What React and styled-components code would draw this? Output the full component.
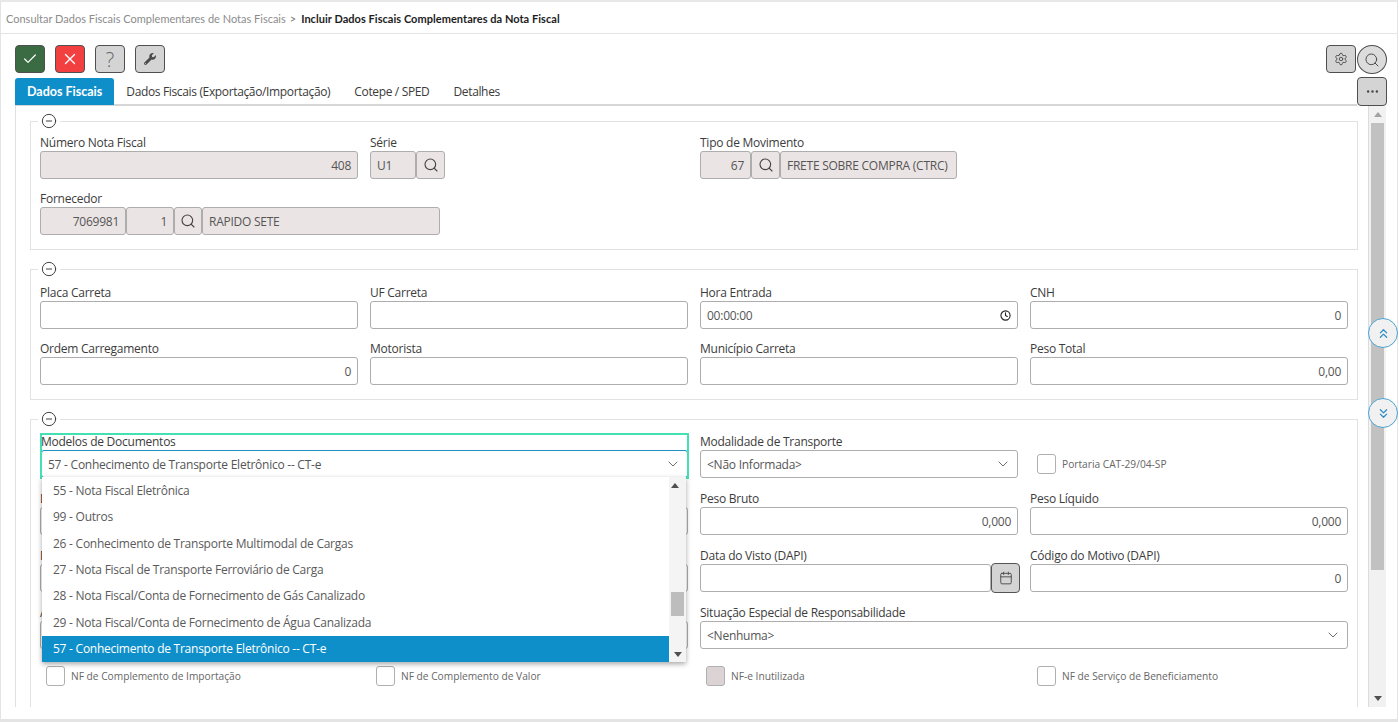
import styled, { createGlobalStyle } from 'styled-components';
import { Check, X, Search, Settings, Ellipsis, Clock, Calendar, ChevronDown, ChevronsUp, ChevronsDown, CircleMinus } from 'lucide-react';
import { FaWrench } from 'react-icons/fa';

const GlobalStyle = createGlobalStyle`
  html, body {
    margin: 0;
    padding: 0;
    background: #fff;
    overflow: hidden;
  }
  * {
    box-sizing: border-box;
  }
`;

const Frame = styled.div`
  height: 722px;
  border-top: 2px solid #e8e8e8;
  border-bottom: 3px solid #e4e4e4;
  border-left: 1px solid #e4e4e4;
  border-right: 1px solid #e4e4e4;
  margin-right: 1px;
  font-family: "Open Sans", sans-serif;
  font-size: 12px;
  letter-spacing: -0.25px;
  color: #444;
  display: flex;
  flex-direction: column;
`;

const Breadcrumb = styled.div`
  height: 32px;
  flex: none;
  padding: 1px 0 0 5px;
  display: flex;
  align-items: center;
  border-bottom: 1px solid #e4e4e4;
  font-family: Lato, sans-serif;
  font-size: 11px;
  letter-spacing: 0;
  color: #8c8c8c;
`;

const Sep = styled.span`
  margin: 0 5px 0 4px;
  color: #777;
`;

const Current = styled.b`
  color: #1d1d1d;
  letter-spacing: 0.04px;
`;

const Toolbar = styled.div`
  flex: none;
  height: 28px;
  margin-top: 11px;
  padding: 0 10px 0 14px;
  display: flex;
  justify-content: space-between;
`;

const ButtonGroup = styled.div`
  display: flex;
  gap: ${p => p.$gap || 0}px;
`;

const ToolButton = styled.button`
  flex: none;
  width: ${p => p.$w || 30}px;
  height: ${p => p.$h || 28}px;
  margin-top: ${p => p.$up || 0}px;
  padding: 0;
  display: flex;
  align-items: center;
  justify-content: center;
  border: 1px solid #4f4f4f;
  border-radius: ${p => p.$round ? '50%' : '4px'};
  background: ${p => p.$bg || '#d4d4d4'};
  color: ${p => p.$fg || '#4a4a4a'};
  font-family: "Open Sans", sans-serif;
  font-size: 20px;
  font-weight: 300;
`;

const TabRow = styled.div`
  flex: none;
  height: 28px;
  margin-top: 5px;
  padding: 0 10px 0 14px;
  display: flex;
  align-items: flex-start;
`;

const TabList = styled.div`
  flex: 1;
  height: 28px;
  display: flex;
  border-bottom: 2px solid #d6d6d6;
`;

const Tab = styled.div`
  height: 27px;
  padding: 0 12px;
  display: flex;
  align-items: center;
  border-radius: 3px 3px 0 0;
  white-space: nowrap;
  color: ${p => p.$active ? '#fff' : '#3a3a3a'};
  background: ${p => p.$active ? '#0f8fca' : 'transparent'};
  font-weight: ${p => p.$active ? 700 : 400};
  font-size: ${p => p.$active ? '12.5px' : '12px'};
  letter-spacing: ${p => p.$active ? '0' : '-0.35px'};
  font-family: ${p => p.$active ? 'Lato, sans-serif' : '"Open Sans", sans-serif'};
`;

const Body = styled.div`
  position: relative;
  flex: none;
  height: 601px;
  display: flex;
`;

const Scroller = styled.div`
  width: 1353px;
  margin-left: 14px;
  padding: 8px 10px 0 14px;
  border-left: 1px solid #e0e0e0;
  overflow: hidden;
  display: flex;
  flex-direction: column;
  gap: 12px;
`;

const Bar = styled.div`
  width: 18px;
  height: 100%;
  background: #f1f1f1;
  border-left: 1px solid #dcdcdc;
  display: flex;
  flex-direction: column;
  align-items: center;
  justify-content: space-between;
  padding: 6px 0;
`;

const Thumb = styled.div`
  width: 13px;
  background: #c1c1c1;
  height: ${p => p.$h}px;
`;

const BarTop = styled.div`
  display: flex;
  flex-direction: column;
  align-items: center;
  gap: 6px;
`;

const Arrow = styled.div`
  width: 0;
  height: 0;
  border-left: 4px solid transparent;
  border-right: 4px solid transparent;
  ${p => p.$down ? `border-top: 5px solid ${p.$c || '#505050'};` : `border-bottom: 5px solid ${p.$c || '#a3a3a3'};`}
`;

const RoundJump = styled.div`
  position: absolute;
  left: 1367px;
  top: ${p => p.$top}px;
  width: 30px;
  height: 30px;
  border-radius: 50%;
  border: 1.5px solid #4aa3d2;
  background: #f1f1f1;
  color: #2a8cc4;
  display: flex;
  align-items: center;
  justify-content: center;
`;

const Group = styled.fieldset`
  margin: 0;
  flex: none;
  padding: ${p => p.$top}px 9px 14px 9px;
  border: 1px solid #e2e2e2;
  min-width: 0;
`;

const Legend = styled.legend`
  margin-left: -2px;
  padding: 0 3px;
  height: 14px;
  display: flex;
  align-items: center;
  color: #333;
`;

const Grid = styled.div`
  display: grid;
  grid-template-columns: repeat(4, 318px);
  column-gap: 12px;
  row-gap: ${p => p.$gap || 12}px;
`;

const Field = styled.div`
  position: relative;
  min-width: 0;
  grid-column: ${p => p.$span ? `span ${p.$span}` : 'auto'};
`;

const Focused = styled(Field)`
  outline: 2px solid #43e0b4;
  outline-offset: -1px;
  margin-left: 1px;
`;

const NextRowField = styled(Field)`
  grid-column-start: 4;
  padding: 6px 0 0 14px;
`;

const Label = styled.div`
  height: 16px;
  line-height: 16px;
  font-size: 12px;
  color: #3c3c3c;
  white-space: nowrap;
`;

const Control = styled.div`
  display: flex;
  height: 28px;
  width: ${p => p.$w ? `${p.$w}px` : '100%'};
`;

const Input = styled.div`
  flex: ${p => p.$w ? `0 0 ${p.$w}px` : 1};
  min-width: 0;
  height: 28px;
  padding: 0 6px;
  display: flex;
  align-items: center;
  justify-content: ${p => p.$right ? 'flex-end' : 'space-between'};
  border: 1px solid ${p => p.$focus ? '#1f8fc4' : '#adadad'};
  border-radius: 3px;
  background: ${p => p.$off ? '#ebe4e4' : '#fff'};
  color: #555;
  font-size: 12px;
  white-space: nowrap;
`;

const Lookup = styled.div`
  flex: 0 0 ${p => p.$w || 29}px;
  height: 28px;
  display: flex;
  align-items: center;
  justify-content: center;
  border: 1px solid #adadad;
  border-radius: 3px;
  background: #ebe4e4;
  color: #444;
`;

const DateButton = styled.div`
  flex: 0 0 29px;
  height: 30px;
  margin: -1px -2px 0 0;
  display: flex;
  align-items: center;
  justify-content: center;
  border: 1px solid #555;
  border-radius: 4px;
  background: #d4d4d4;
  color: #444;
`;

const CheckRow = styled.label`
  display: flex;
  align-items: center;
  gap: 6px;
  height: ${p => p.$h || 20}px;
  margin-top: ${p => p.$mt || 0}px;
  padding-left: ${p => p.$in || 6}px;
  font-size: 10.2px;
  letter-spacing: 0;
  color: #666;
  white-space: nowrap;
`;

const Box = styled.span`
  flex: none;
  width: 19px;
  height: 20px;
  border: 1px solid #b0b0b0;
  border-radius: 3px;
  background: ${p => p.$off ? '#dcd4d4' : '#fff'};
`;

const Dropdown = styled.div`
  position: absolute;
  left: 1px;
  top: 43px;
  width: 644px;
  height: 185px;
  background: #fff;
  box-shadow: 0 2px 5px rgba(0, 0, 0, 0.35);
  display: flex;
  z-index: 2;
`;

const Options = styled.div`
  flex: 1;
  display: flex;
  flex-direction: column;
`;

const Option = styled.div`
  flex: 1;
  padding-left: 11px;
  display: flex;
  align-items: center;
  color: ${p => p.$on ? '#fff' : '#5a5a5a'};
  background: ${p => p.$on ? '#0f8fca' : 'transparent'};
`;

const MiniBar = styled.div`
  flex: 0 0 17px;
  background: #f4f4f4;
  display: flex;
  flex-direction: column;
  align-items: center;
  justify-content: space-between;
  padding: 6px 0 5px;
`;

const MiniThumb = styled.div`
  width: 13px;
  height: 24px;
  margin-top: 104px;
  background: #bdbdbd;
`;

const options = [
  '55 - Nota Fiscal Eletrônica',
  '99 - Outros',
  '26 - Conhecimento de Transporte Multimodal de Cargas',
  '27 - Nota Fiscal de Transporte Ferroviário de Carga',
  '28 - Nota Fiscal/Conta de Fornecimento de Gás Canalizado',
  '29 - Nota Fiscal/Conta de Fornecimento de Água Canalizada',
  '57 - Conhecimento de Transporte Eletrônico -- CT-e',
];

const Toggle = () => (
  <Legend><CircleMinus size={16} strokeWidth={1.4} /></Legend>
);

const Lens = () => <Search size={16} strokeWidth={1.7} />;

const Plain = ({ label, value, right = true }) => (
  <Field>
    <Label>{label}</Label>
    <Control><Input $right={right}>{value}</Input></Control>
  </Field>
);

function App() {
  return (
    <Frame>
      <GlobalStyle />
      <Breadcrumb>
        Consultar Dados Fiscais Complementares de Notas Fiscais
        <Sep>&gt;</Sep>
        <Current>Incluir Dados Fiscais Complementares da Nota Fiscal</Current>
      </Breadcrumb>

      <Toolbar>
        <ButtonGroup $gap={10}>
          <ToolButton $bg="#3a6b43" $fg="#fff"><Check size={16} strokeWidth={1.8} /></ToolButton>
          <ToolButton $bg="#f24040" $fg="#fff"><X size={18} strokeWidth={1.8} /></ToolButton>
          <ToolButton $fg="#666">?</ToolButton>
          <ToolButton><FaWrench size={12} /></ToolButton>
        </ButtonGroup>
        <ButtonGroup $gap={1}>
          <ToolButton><Settings size={14} strokeWidth={1.6} /></ToolButton>
          <ToolButton $round $h={29} $bg="#dcdcdc"><Search size={16} strokeWidth={1.5} /></ToolButton>
        </ButtonGroup>
      </Toolbar>

      <TabRow>
        <TabList>
          <Tab $active>Dados Fiscais</Tab>
          <Tab>Dados Fiscais (Exportação/Importação)</Tab>
          <Tab>Cotepe / SPED</Tab>
          <Tab>Detalhes</Tab>
        </TabList>
        <ToolButton $h={29} $up={-1}><Ellipsis size={15} strokeWidth={2} /></ToolButton>
      </TabRow>

      <Body>
        <Scroller>
          <Group $top={7}>
            <Toggle />
            <Grid>
              <Field>
                <Label>Número Nota Fiscal</Label>
                <Control><Input $off $right>408</Input></Control>
              </Field>
              <Field>
                <Label>Série</Label>
                <Control $w={75}>
                  <Input $off $w={46}>U1</Input>
                  <Lookup><Lens /></Lookup>
                </Control>
              </Field>
              <Field $span={2}>
                <Label>Tipo de Movimento</Label>
                <Control $w={257}>
                  <Input $off $right $w={51}>67</Input>
                  <Lookup><Lens /></Lookup>
                  <Input $off>FRETE SOBRE COMPRA (CTRC)</Input>
                </Control>
              </Field>
              <Field $span={4}>
                <Label>Fornecedor</Label>
                <Control $w={400}>
                  <Input $off $right $w={86}>7069981</Input>
                  <Input $off $right $w={48}>1</Input>
                  <Lookup $w={28}><Lens /></Lookup>
                  <Input $off>RAPIDO SETE</Input>
                </Control>
              </Field>
            </Grid>
          </Group>

          <Group $top={9}>
            <Toggle />
            <Grid>
              <Plain label="Placa Carreta" />
              <Plain label="UF Carreta" />
              <Field>
                <Label>Hora Entrada</Label>
                <Control><Input>00:00:00<Clock size={11} strokeWidth={2.4} color="#222" /></Input></Control>
              </Field>
              <Plain label="CNH" value="0" />
              <Plain label="Ordem Carregamento" value="0" />
              <Plain label="Motorista" />
              <Plain label="Município Carreta" />
              <Plain label="Peso Total" value="0,00" />
            </Grid>
          </Group>

          <Group $top={8}>
            <Toggle />
            <Grid $gap={13}>
              <Focused $span={2}>
                <Label>Modelos de Documentos</Label>
                <Control>
                  <Input $focus>57 - Conhecimento de Transporte Eletrônico -- CT-e<ChevronDown size={16} strokeWidth={1.3} /></Input>
                </Control>
                <Dropdown>
                  <Options>
                    {options.map((o, i) => <Option key={o} $on={i === options.length - 1}>{o}</Option>)}
                  </Options>
                  <MiniBar>
                    <div>
                      <Arrow $c="#505050" />
                      <MiniThumb />
                    </div>
                    <Arrow $down />
                  </MiniBar>
                </Dropdown>
              </Focused>
              <Field>
                <Label>Modalidade de Transporte</Label>
                <Control><Input>&lt;Não Informada&gt;<ChevronDown size={16} strokeWidth={1.3} /></Input></Control>
              </Field>
              <Field>
                <Label />
                <Control><CheckRow $h={28} $in={7}><Box />Portaria CAT-29/04-SP</CheckRow></Control>
              </Field>

              {/* only the first letter of these labels shows past the open list */}
              <Plain label="D" />
              <Plain />
              <Plain label="Peso Bruto" value="0,000" />
              <Plain label="Peso Líquido" value="0,000" />

              <Plain label="D" />
              <Plain />
              <Field>
                <Label>Data do Visto (DAPI)</Label>
                <Control>
                  <Input />
                  <DateButton><Calendar size={14} strokeWidth={1.5} /></DateButton>
                </Control>
              </Field>
              <Plain label="Código do Motivo (DAPI)" value="0" />

              <Plain label="A" />
              <Plain />
              <Field $span={2}>
                <Label>Situação Especial de Responsabilidade</Label>
                <Control><Input>&lt;Nenhuma&gt;<ChevronDown size={16} strokeWidth={1.3} /></Input></Control>
              </Field>

              <CheckRow $mt={4}><Box />NF de Complemento de Importação</CheckRow>
              <CheckRow $mt={4}><Box />NF de Complemento de Valor</CheckRow>
              <CheckRow $mt={4}><Box $off />NF-e Inutilizada</CheckRow>
              <CheckRow $mt={4} $in={7}><Box />NF de Serviço de Beneficiamento</CheckRow>

              <NextRowField>
                <Label>Tarifa</Label>
                <Control><Input /></Control>
              </NextRowField>
            </Grid>
          </Group>
        </Scroller>
        <Bar>
          <BarTop>
            <Arrow />
            <Thumb $h={447} />
          </BarTop>
          <Arrow $down />
        </Bar>
        <RoundJump $top={212}><ChevronsUp size={15} strokeWidth={2} /></RoundJump>
        <RoundJump $top={292}><ChevronsDown size={15} strokeWidth={2} /></RoundJump>
      </Body>
    </Frame>
  );
}

export default App;
